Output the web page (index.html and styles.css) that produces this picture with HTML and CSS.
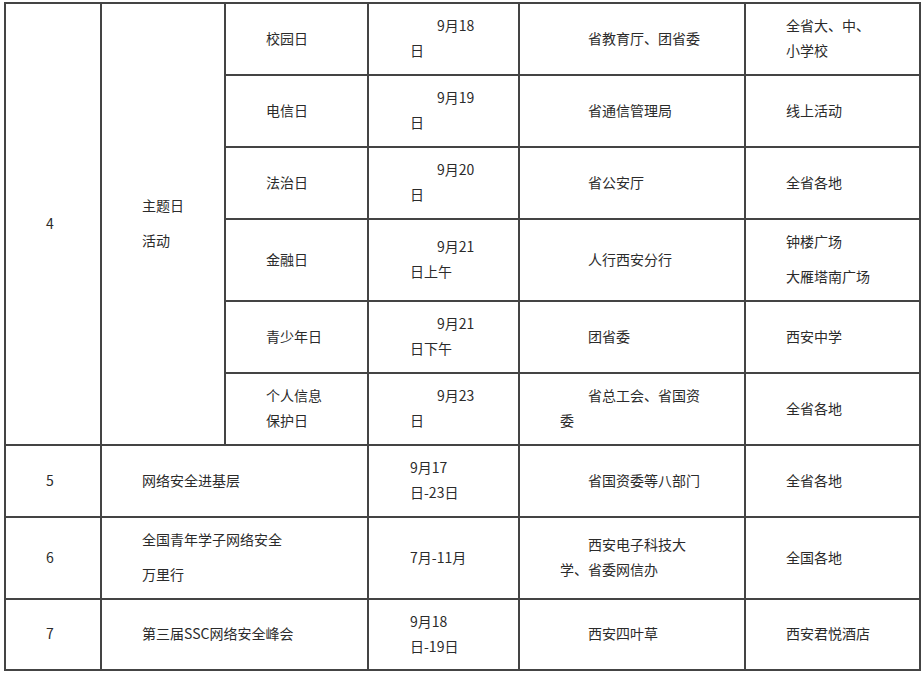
FILE: index.html
```html
<!DOCTYPE html>
<html lang="zh-CN">
<head>
<meta charset="utf-8">
<title>活动安排</title>
<link rel="stylesheet" href="styles.css">
</head>
<body>
<div class="table">
  <div class="cell num span6">4</div>
  <div class="cell name span6"><p>主题日</p><p>活动</p></div>

  <div class="cell day">校园日</div>
  <div class="cell date indent">9月18<br>日</div>
  <div class="cell org">省教育厅、团省委</div>
  <div class="cell place">全省大、中、<br>小学校</div>

  <div class="cell day">电信日</div>
  <div class="cell date indent">9月19<br>日</div>
  <div class="cell org">省通信管理局</div>
  <div class="cell place">线上活动</div>

  <div class="cell day">法治日</div>
  <div class="cell date indent">9月20<br>日</div>
  <div class="cell org">省公安厅</div>
  <div class="cell place">全省各地</div>

  <div class="cell day">金融日</div>
  <div class="cell date indent">9月21<br>日上午</div>
  <div class="cell org">人行西安分行</div>
  <div class="cell place"><p>钟楼广场</p><p>大雁塔南广场</p></div>

  <div class="cell day">青少年日</div>
  <div class="cell date indent">9月21<br>日下午</div>
  <div class="cell org">团省委</div>
  <div class="cell place">西安中学</div>

  <div class="cell day">个人信息<br>保护日</div>
  <div class="cell date indent">9月23<br>日</div>
  <div class="cell org">省总工会、省国资<br>委</div>
  <div class="cell place">全省各地</div>

  <div class="cell num">5</div>
  <div class="cell name wide">网络安全进基层</div>
  <div class="cell date">9月17<br>日-23日</div>
  <div class="cell org">省国资委等八部门</div>
  <div class="cell place">全省各地</div>

  <div class="cell num">6</div>
  <div class="cell name wide"><p>全国青年学子网络安全</p><p>万里行</p></div>
  <div class="cell date">7月-11月</div>
  <div class="cell org">西安电子科技大<br>学、省委网信办</div>
  <div class="cell place">全国各地</div>

  <div class="cell num">7</div>
  <div class="cell name wide">第三届SSC网络安全峰会</div>
  <div class="cell date">9月18<br>日-19日</div>
  <div class="cell org">西安四叶草</div>
  <div class="cell place">西安君悦酒店</div>
</div>
</body>
</html>
```

FILE: styles.css
```css
html, body {
  margin: 0;
  padding: 0;
  background: #ffffff;
}

body {
  padding: 2px 0 0 4px;
  font-family: "Noto Sans CJK SC", "Noto Sans", sans-serif;
  font-size: 14px;
  color: #2b2b2b;
}

.table {
  display: grid;
  width: 917px;
  box-sizing: border-box;
  background: #444444;
  padding: 2px;
  gap: 2px;
  grid-template-columns: 94px 122px 141px 149px 224px 173px;
  grid-template-rows: 70px 70px 70px 80px 70px 70px 70px 80px 69px;
}

.cell {
  background: #ffffff;
  display: flex;
  flex-direction: column;
  justify-content: center;
  padding: 0 8px 2px 40px;
  line-height: 25px;
  white-space: nowrap;
}

.cell p {
  margin: 0;
  line-height: 25px;
}

.cell p + p {
  margin-top: 10px;
}

.span6 {
  grid-row: span 6;
}

.wide {
  grid-column: span 2;
}

.num {
  padding: 0 6px 2px 0;
  align-items: center;
  text-align: center;
}

.date {
  padding-left: 41px;
}

.indent {
  text-indent: 27px;
}

.org {
  text-indent: 28px;
}
```
